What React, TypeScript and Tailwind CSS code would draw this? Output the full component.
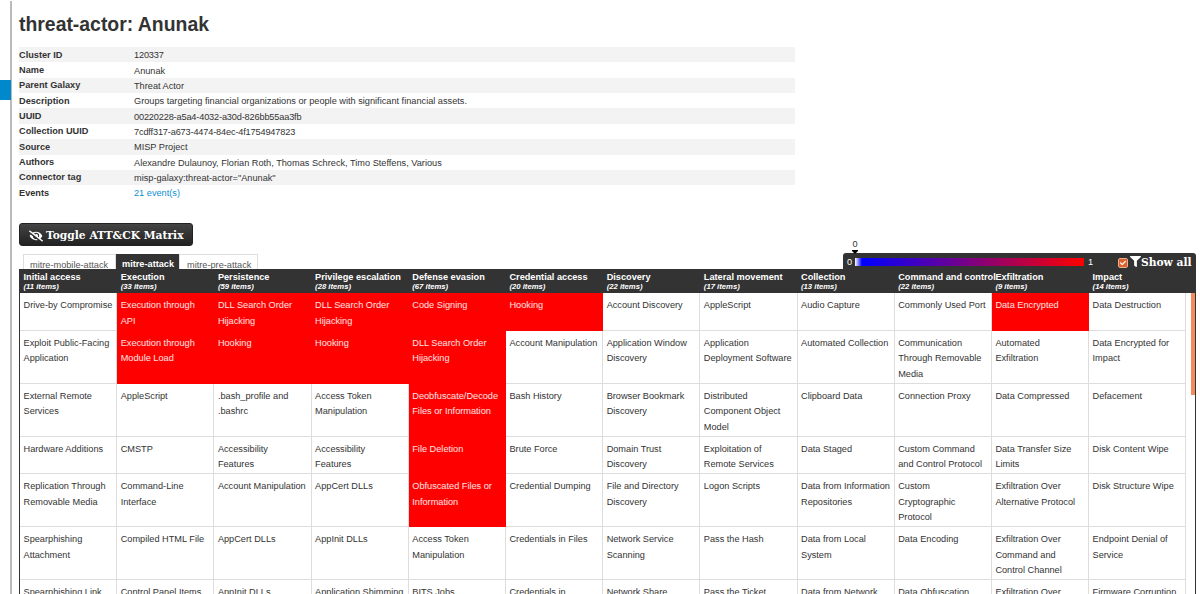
import { FaEyeSlash, FaFilter, FaCheck } from "react-icons/fa";

const details = [
  { label: "Cluster ID", value: "120337", id: true },
  { label: "Name", value: "Anunak" },
  { label: "Parent Galaxy", value: "Threat Actor" },
  { label: "Description", value: "Groups targeting financial organizations or people with significant financial assets." },
  { label: "UUID", value: "00220228-a5a4-4032-a30d-826bb55aa3fb", id: true },
  { label: "Collection UUID", value: "7cdff317-a673-4474-84ec-4f1754947823", id: true },
  { label: "Source", value: "MISP Project" },
  { label: "Authors", value: "Alexandre Dulaunoy, Florian Roth, Thomas Schreck, Timo Steffens, Various" },
  { label: "Connector tag", value: 'misp-galaxy:threat-actor="Anunak"' },
  { label: "Events", value: "21 event(s)", link: true },
];

const tactics = [
  { name: "Initial access", count: 11 },
  { name: "Execution", count: 33 },
  { name: "Persistence", count: 59 },
  { name: "Privilege escalation", count: 28 },
  { name: "Defense evasion", count: 67 },
  { name: "Credential access", count: 20 },
  { name: "Discovery", count: 22 },
  { name: "Lateral movement", count: 17 },
  { name: "Collection", count: 13 },
  { name: "Command and control", count: 22 },
  { name: "Exfiltration", count: 9 },
  { name: "Impact", count: 14 },
];

// hits = column indexes that have a score of 1
const rows = [
  {
    tall: false,
    hits: [1, 2, 3, 4, 5, 10],
    cells: [
      "Drive-by Compromise", "Execution through\nAPI", "DLL Search Order\nHijacking", "DLL Search Order\nHijacking",
      "Code Signing", "Hooking", "Account Discovery", "AppleScript",
      "Audio Capture", "Commonly Used Port", "Data Encrypted", "Data Destruction",
    ],
  },
  {
    tall: true,
    hits: [1, 2, 3, 4],
    cells: [
      "Exploit Public-Facing\nApplication", "Execution through\nModule Load", "Hooking", "Hooking",
      "DLL Search Order\nHijacking", "Account Manipulation", "Application Window\nDiscovery", "Application\nDeployment Software",
      "Automated Collection", "Communication\nThrough Removable\nMedia", "Automated\nExfiltration", "Data Encrypted for\nImpact",
    ],
  },
  {
    tall: true,
    hits: [4],
    cells: [
      "External Remote\nServices", "AppleScript", ".bash_profile and\n.bashrc", "Access Token\nManipulation",
      "Deobfuscate/Decode\nFiles or Information", "Bash History", "Browser Bookmark\nDiscovery", "Distributed\nComponent Object\nModel",
      "Clipboard Data", "Connection Proxy", "Data Compressed", "Defacement",
    ],
  },
  {
    tall: false,
    hits: [4],
    cells: [
      "Hardware Additions", "CMSTP", "Accessibility\nFeatures", "Accessibility\nFeatures",
      "File Deletion", "Brute Force", "Domain Trust\nDiscovery", "Exploitation of\nRemote Services",
      "Data Staged", "Custom Command\nand Control Protocol", "Data Transfer Size\nLimits", "Disk Content Wipe",
    ],
  },
  {
    tall: true,
    hits: [4],
    cells: [
      "Replication Through\nRemovable Media", "Command-Line\nInterface", "Account Manipulation", "AppCert DLLs",
      "Obfuscated Files or\nInformation", "Credential Dumping", "File and Directory\nDiscovery", "Logon Scripts",
      "Data from Information\nRepositories", "Custom\nCryptographic\nProtocol", "Exfiltration Over\nAlternative Protocol", "Disk Structure Wipe",
    ],
  },
  {
    tall: true,
    hits: [],
    cells: [
      "Spearphishing\nAttachment", "Compiled HTML File", "AppCert DLLs", "AppInit DLLs",
      "Access Token\nManipulation", "Credentials in Files", "Network Service\nScanning", "Pass the Hash",
      "Data from Local\nSystem", "Data Encoding", "Exfiltration Over\nCommand and\nControl Channel", "Endpoint Denial of\nService",
    ],
  },
  {
    tall: true,
    hits: [],
    cells: [
      "Spearphishing Link", "Control Panel Items", "AppInit DLLs", "Application Shimming",
      "BITS Jobs", "Credentials in", "Network Share", "Pass the Ticket",
      "Data from Network", "Data Obfuscation", "Exfiltration Over", "Firmware Corruption",
    ],
  },
];

export default function App() {
  return (
    <div className="flex h-[594px] w-[1200px] overflow-hidden bg-white font-['Liberation_Sans',Arial,sans-serif] text-[9.2px] leading-[15.37px] text-[#333]">
      {/* Side menu edge */}
      <aside className="mt-px w-3 shrink-0 border-r-2 border-[#bbb] pt-[79px]">
        <div className="-mr-px h-5 bg-[#0088cc]" />
      </aside>

      <main className="w-[1184px] shrink-0 pl-[7px]">
        <h1 className="h-[47px] pt-[9px] text-[19.4px] leading-[31px] font-bold">threat-actor: Anunak</h1>
        <DetailTable />

        <div className="mt-[22px] flex h-[24px]">
          <button className="flex h-[23px] w-[174px] items-center gap-[3px] rounded-[3px] border border-[#222] bg-linear-to-b from-[#444] to-[#222] pt-[3px] pl-[9px] font-['DejaVu_Serif',serif] text-[10.7px] font-bold whitespace-nowrap text-white">
            <FaEyeSlash size={14} className="shrink-0" />
            Toggle ATT&amp;CK Matrix
          </button>
        </div>

        <div className="flex h-[22px] items-end justify-between">
          <Tabs />
          <Legend />
        </div>
        <Matrix />
      </main>
    </div>
  );
}

function DetailTable() {
  return (
    <dl className="w-[776px]">
      {details.map((d) => (
        <div key={d.label} className="flex h-[15.37px] odd:bg-[#f3f3f3]">
          <dt className="w-[115px] pt-[0.6px] font-bold whitespace-nowrap">{d.label}</dt>
          <dd className={`pt-[1.2px] ${d.link ? "text-[#0d8fd0]" : ""} ${d.id ? "tracking-[-0.16px]" : ""}`}>{d.value}</dd>
        </div>
      ))}
    </dl>
  );
}

function Tabs() {
  return (
    <nav className="flex h-[15px] pl-1 leading-[20px] whitespace-nowrap text-[#555]">
      <span className="w-[93px] border border-b-0 border-[#ddd] pl-[6px]">mitre-mobile-attack</span>
      <span className="w-[63px] bg-[#333] pl-[6px] font-bold text-white">mitre-attack</span>
      <span className="w-[79px] border border-b-0 border-[#ddd] pl-[7px]">mitre-pre-attack</span>
    </nav>
  );
}

function Legend() {
  return (
    <div className="relative flex h-[16px] w-[353px] items-center rounded-t-[3px] bg-[#333] pl-[4px] text-white">
      <span className="w-[8px] pt-[5px]">0</span>
      <div className="mt-[3px] h-2 w-[229px] bg-[linear-gradient(to_right,white_0%,blue_3%,red_100%)]" />
      <span className="w-[35px] pt-[5px] pl-[4px]">1</span>
      <span className="mt-[5px] flex size-2 items-center justify-center rounded-[1px] bg-[#e0602c] outline-[0.5px] outline-[#e8b090]">
        <FaCheck size={6} />
      </span>
      <FaFilter size={11} className="mt-[2px] ml-[3px] shrink-0" />
      <span className="pt-[4px] font-['DejaVu_Serif',serif] text-[10.7px] font-bold whitespace-nowrap">Show all</span>
      {/* Current score marker */}
      <div className="absolute -top-[14px] left-[8px] flex w-2 flex-col items-center text-[#333]">
        <span className="leading-[11px]">0</span>
        <svg width="6" height="4" viewBox="0 0 6 4">
          <path d="M0 0h6v1L3 4 0 1z" fill="#000" />
        </svg>
      </div>
    </div>
  );
}

function Matrix() {
  return (
    <section className="w-[1177px] border-x border-[#333]">
      <header className="flex h-[24.6px] bg-[#333] pt-[2px] text-white">
        {tactics.map((t) => (
          <div key={t.name} className="w-[97.2px] shrink-0 pl-[3.5px] font-bold whitespace-nowrap">
            <div className="leading-[12px]">{t.name}</div>
            <div className="text-[7.7px] leading-[7px] italic">({t.count} items)</div>
          </div>
        ))}
      </header>
      <div className="flex justify-between">
        <div>
          {rows.map((row, i) => (
            <div key={i} className={row.tall ? "flex h-[53px]" : "flex h-[37.4px]"}>
              {row.cells.map((cell, j) => (
                <Cell key={j} text={cell} hit={(row.hits as number[]).includes(j)} />
              ))}
            </div>
          ))}
        </div>
        <div className="h-[102px] w-[4px] bg-[#f58a5c]" />
      </div>
    </section>
  );
}

function Cell({ text, hit }: { text: string; hit: boolean }) {
  return (
    <div
      className={`w-[97.2px] shrink-0 border-r border-b pt-[5.3px] pl-[3.5px] whitespace-pre ${
        hit ? "border-[#f00] bg-[#f00] text-white/90" : "border-[#ddd]"
      }`}
    >
      {text}
    </div>
  );
}
